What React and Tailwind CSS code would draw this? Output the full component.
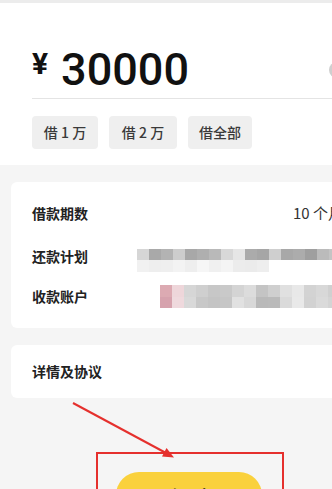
import React from "react";

const row2Top = [
  "bg-[#d6d6d6]", "bg-[#a9a9a9]", "bg-[#b3b3b3]", "bg-[#cdcdcd]", "bg-[#a8a8a8]", "bg-[#afafaf]",
  "bg-[#b9b9b9]", "bg-[#d8d8d8]", "bg-[#e6e6e6]", "bg-[#ababab]", "bg-[#a6a6a6]", "bg-[#cfcfcf]",
  "bg-[#a8a8a8]", "bg-[#acacac]", "bg-[#9f9f9f]", "bg-[#bbbbbb]", "bg-[#c4c4c4]",
];
const row2Bottom = [
  "bg-[#f1f1f1]", "bg-[#eeeeee]", "bg-[#efefef]", "bg-[#f3f3f3]", "bg-[#eeeeee]", "bg-[#f6f6f6]",
  "bg-[#f0f0f0]", "bg-[#f4f4f4]", "bg-[#ececec]", "bg-[#ebebeb]", "bg-[#eeeeee]",
];
const row3Top = [
  "bg-[#dcaab2]", "bg-[#eed6da]", "bg-[#d6d6d6]", "bg-[#cfcfcf]", "bg-[#c7c7c7]", "bg-[#c9c9c9]",
  "bg-[#d4d4d4]", "bg-[#dcdcdc]", "bg-[#c4c4c4]", "bg-[#cfcfcf]", "bg-[#e0e0e0]", "bg-[#e8e8e8]",
  "bg-[#d3d3d3]", "bg-[#d8d8d8]", "bg-[#d0d0d0]",
];
const row3Bottom = [
  "bg-[#d6a2ad]", "bg-[#efd9dd]", "bg-[#d9d9d9]", "bg-[#c8c8c8]", "bg-[#c4c4c4]", "bg-[#c6c6c6]",
  "bg-[#e1e1e1]", "bg-[#d8d8d8]", "bg-[#b9b9b9]", "bg-[#bababa]", "bg-[#dadada]", "bg-[#e9e9e9]",
  "bg-[#d2d2d2]", "bg-[#dadada]", "bg-[#d4d4d4]",
];

function Blocks({ top, bottom, topH, bottomH }) {
  return (
    <div className="flex flex-col blur-[0.6px]">
      <div className="flex">
        {top.map((c, i) => (
          <div key={i} className={`w-[12px] ${topH} ${c}`} />
        ))}
      </div>
      <div className="flex">
        {bottom.map((c, i) => (
          <div key={i} className={`w-[12px] ${bottomH} ${c}`} />
        ))}
      </div>
    </div>
  );
}

export default function App() {
  return (
    <div
      className="relative w-[332px] h-[489px] overflow-hidden bg-[#f5f5f5]"
      style={{ fontFamily: '"Noto Sans CJK SC", "Noto Sans", sans-serif' }}
    >
      <div className="w-[375px]">
        {/* Amount panel */}
        <div className="bg-white border-t-[3px] border-[#ececec] pl-[32px] pt-[44px] pb-[16px]">
          <div className="flex items-start h-[45px] pr-[30px]">
            <span
              className="mt-[2px] text-[30px] leading-none font-bold text-[#111]"
              style={{ fontFamily: "Roboto, sans-serif" }}
            >
              ¥
            </span>
            <span
              className="ml-[13px] text-[45px] leading-none font-medium text-[#111]"
              style={{ fontFamily: "Roboto, sans-serif" }}
            >
              30000
            </span>
            <div className="ml-auto self-center w-[16px] h-[16px] rounded-full bg-[#cfcfcf]" />
          </div>
          <div className="mt-[6px] h-px bg-[#e4e4e4]" />
          <div className="mt-[17px] flex gap-[11px]">
            <div className="w-[66px] h-[33px] rounded-[4px] bg-[#efefef] flex items-center justify-center text-[14px] font-medium text-[#3a3a3a]">
              借 1 万
            </div>
            <div className="w-[68px] h-[33px] rounded-[4px] bg-[#efefef] flex items-center justify-center text-[14px] font-medium text-[#3a3a3a]">
              借 2 万
            </div>
            <div className="w-[64px] h-[33px] rounded-[4px] bg-[#efefef] flex items-center justify-center text-[14px] font-medium text-[#3a3a3a]">
              借全部
            </div>
          </div>
        </div>

        {/* Info card */}
        <div className="mx-[11px] mt-[17px] bg-white rounded-[6px] px-[21px] pt-[20px] pb-[21px]">
          <div className="flex items-center justify-between h-[22px]">
            <span className="text-[14px] font-bold text-[#222]">借款期数</span>
            <span className="text-[15px] text-[#333]">10 个月</span>
          </div>
          <div className="flex items-start h-[22px] mt-[21px]">
            <span className="w-[105px] shrink-0 text-[14px] leading-[22px] font-bold text-[#222]">还款计划</span>
            <div className="mt-[4px]">
              <Blocks top={row2Top} bottom={row2Bottom} topH="h-[11px]" bottomH="h-[12px]" />
            </div>
          </div>
          <div className="flex items-start h-[22px] mt-[18px]">
            <span className="w-[128px] shrink-0 text-[14px] leading-[22px] font-bold text-[#222]">收款账户</span>
            <Blocks top={row3Top} bottom={row3Bottom} topH="h-[12px]" bottomH="h-[11px]" />
          </div>
        </div>

        {/* Details card */}
        <div className="mx-[11px] mt-[17px] h-[53px] bg-white rounded-[6px] px-[21px] flex items-center">
          <span className="text-[14px] font-bold text-[#222]">详情及协议</span>
        </div>

        {/* Button */}
        <div className="ml-[116px] mt-[74px] w-[146px] h-[46px] rounded-[23px] bg-[#fad13c] flex justify-center pt-[13px]">
          <span className="text-[19px] leading-[24px] font-medium text-[#3a2f10] tracking-[12px] pl-[12px]">确定</span>
        </div>
      </div>

      {/* Annotation overlay */}
      <div className="absolute left-[96px] top-[452px] w-[188px] h-[60px] border-2 border-[#e5302d] pointer-events-none" />
      <svg className="absolute left-0 top-0 pointer-events-none" width="332" height="489" viewBox="0 0 332 489">
        <line x1="73" y1="403" x2="166" y2="453" stroke="#e5302d" strokeWidth="2" />
        <polygon points="174,457.5 162,456.5 166.5,448" fill="#e5302d" />
      </svg>
    </div>
  );
}
